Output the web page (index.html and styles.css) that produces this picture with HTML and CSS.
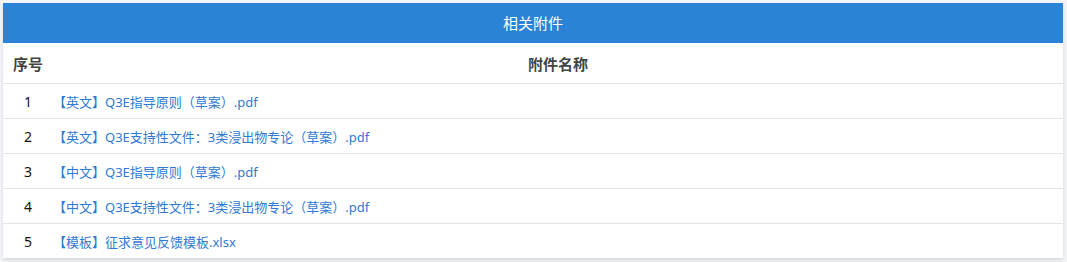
FILE: index.html
```html
<!DOCTYPE html>
<html lang="zh">
<head>
<meta charset="utf-8">
<title>相关附件</title>
<link rel="stylesheet" href="styles.css">
</head>
<body>
<div class="card">
  <div class="card-title">相关附件</div>
  <table class="files">
    <thead>
      <tr><th class="col-no">序号</th><th class="col-name">附件名称</th></tr>
    </thead>
    <tbody>
      <tr><td class="col-no">1</td><td class="col-name"><a href="#">【英文】Q3E指导原则（草案）.pdf</a></td></tr>
      <tr><td class="col-no">2</td><td class="col-name"><a href="#">【英文】Q3E支持性文件：3类浸出物专论（草案）.pdf</a></td></tr>
      <tr><td class="col-no">3</td><td class="col-name"><a href="#">【中文】Q3E指导原则（草案）.pdf</a></td></tr>
      <tr><td class="col-no">4</td><td class="col-name"><a href="#">【中文】Q3E支持性文件：3类浸出物专论（草案）.pdf</a></td></tr>
      <tr><td class="col-no">5</td><td class="col-name"><a href="#">【模板】征求意见反馈模板.xlsx</a></td></tr>
    </tbody>
  </table>
</div>
</body>
</html>
```
FILE: styles.css
```css
html, body {
  margin: 0;
  padding: 0;
  background: #f3f5f8;
}
body {
  padding: 3px 4px 4px 3px;
  font-family: "Noto Sans", "Noto Sans CJK SC", sans-serif;
  color: #333;
}
.card {
  background: #fff;
  box-shadow: 0 2px 4px rgba(0, 0, 0, 0.12);
}
.card-title {
  height: 40px;
  line-height: 40px;
  background: #2a83d6;
  color: #fff;
  text-align: center;
  font-size: 15px;
}
.files {
  width: 100%;
  border-collapse: collapse;
  table-layout: fixed;
}
.files th {
  height: 40px;
  font-size: 15px;
  font-weight: bold;
  color: #444;
  border-bottom: 1px solid #e4e4e4;
  padding: 0;
}
.files td {
  height: 34px;
  font-size: 13px;
  padding: 0;
  border-bottom: 1px solid #e4e4e4;
}
.files tbody tr:last-child td {
  border-bottom: none;
}
.files .col-no {
  width: 50px;
  text-align: center;
}
.files th.col-name {
  text-align: center;
}
.files td.col-no {
  color: #111;
  font-size: 14px;
}
.files a {
  color: #2f7ad3;
  text-decoration: none;
}
```
